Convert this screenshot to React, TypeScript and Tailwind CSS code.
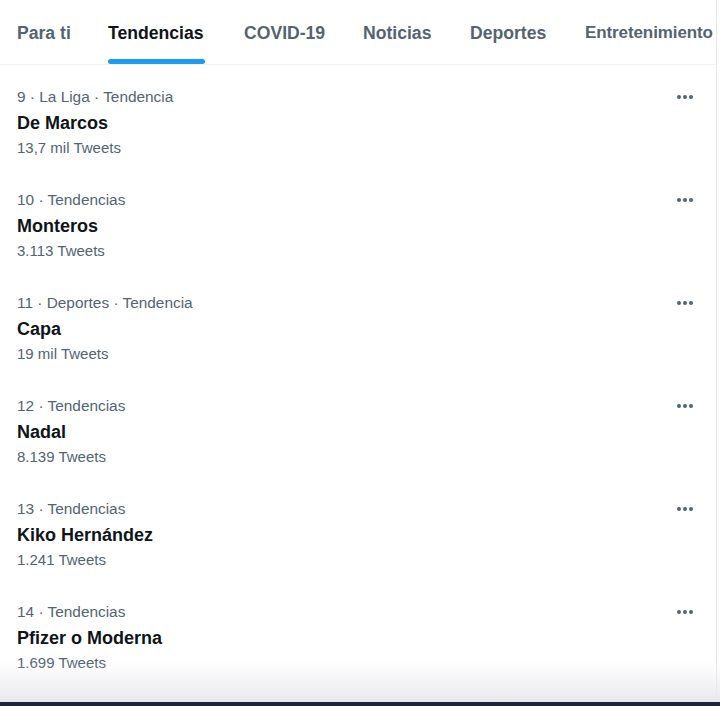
const tabs = [
  { label: "Para ti", w: "w-[91px]" },
  { label: "Tendencias", w: "w-[136px]" },
  { label: "COVID-19", w: "w-[119px]" },
  { label: "Noticias", w: "w-[107px]" },
  { label: "Deportes", w: "w-[115px]" },
  { label: "Entretenimiento", w: "w-[128px]" },
];

const trends = [
  { meta: "9 · La Liga · Tendencia", name: "De Marcos", count: "13,7 mil Tweets" },
  { meta: "10 · Tendencias", name: "Monteros", count: "3.113 Tweets" },
  { meta: "11 · Deportes · Tendencia", name: "Capa", count: "19 mil Tweets" },
  { meta: "12 · Tendencias", name: "Nadal", count: "8.139 Tweets" },
  { meta: "13 · Tendencias", name: "Kiko Hernández", count: "1.241 Tweets" },
  { meta: "14 · Tendencias", name: "Pfizer o Moderna", count: "1.699 Tweets" },
];

function Dots() {
  return (
    <svg width="20" height="20" viewBox="0 0 20 20" className="text-[#536471]">
      <circle cx="4" cy="10" r="2" fill="currentColor" />
      <circle cx="10" cy="10" r="2" fill="currentColor" />
      <circle cx="16" cy="10" r="2" fill="currentColor" />
    </svg>
  );
}

function TrendRow({ meta, name, count }: { meta: string; name: string; count: string }) {
  return (
    <div className="flex justify-between pl-[17px] pr-[21px] pt-[22px] pb-[10px]">
      <div className="flex flex-col">
        <span className="h-5 text-[15.4px] leading-5 text-[#536471]">{meta}</span>
        <span className="mt-1 h-6 text-[18px] font-bold leading-6 text-[#0f1419]">{name}</span>
        <span className="mt-[3px] h-5 text-[15px] leading-5 text-[#536471]">{count}</span>
      </div>
      <div>
        <Dots />
      </div>
    </div>
  );
}

export default function App() {
  return (
    <div
      className="relative flex h-[706px] w-[720px] flex-col overflow-hidden bg-white"
      style={{ fontFamily: '"Liberation Sans", Arial, sans-serif' }}
    >
      <div className="flex h-full w-[717px] flex-col border-r border-[#e6e9ea]">
        {/* Tabs */}
        <div className="flex h-[65px] shrink-0 items-stretch border-b border-[#eff3f4] pl-[17px] whitespace-nowrap">
          {tabs.map((t, i) => (
            <div key={t.label} className={`relative flex shrink-0 items-center pt-[2px] ${t.w}`}>
              <span
                className={`font-bold ${i === 1 ? "text-[#0f1419]" : "text-[#536471]"} ${
                  i === 5 ? "text-[17px] tracking-[-0.1px]" : "text-[17.6px]"
                }`}
              >
                {t.label}
              </span>
              {i === 1 && (
                <div className="absolute bottom-0 left-0 h-[5px] w-[97px] rounded-full bg-[#1d9bf0]" />
              )}
            </div>
          ))}
        </div>

        {/* Trends */}
        <div className="flex flex-col">
          {trends.map((t) => (
            <TrendRow key={t.name} {...t} />
          ))}
        </div>
      </div>

      {/* bottom shade */}
      <div className="pointer-events-none absolute bottom-[4px] left-0 right-0 h-[40px] bg-gradient-to-b from-white/0 to-[#e9e9ed]" />
      <div className="absolute bottom-0 left-0 right-0 h-[4px] bg-[#1e2538]" />
    </div>
  );
}
